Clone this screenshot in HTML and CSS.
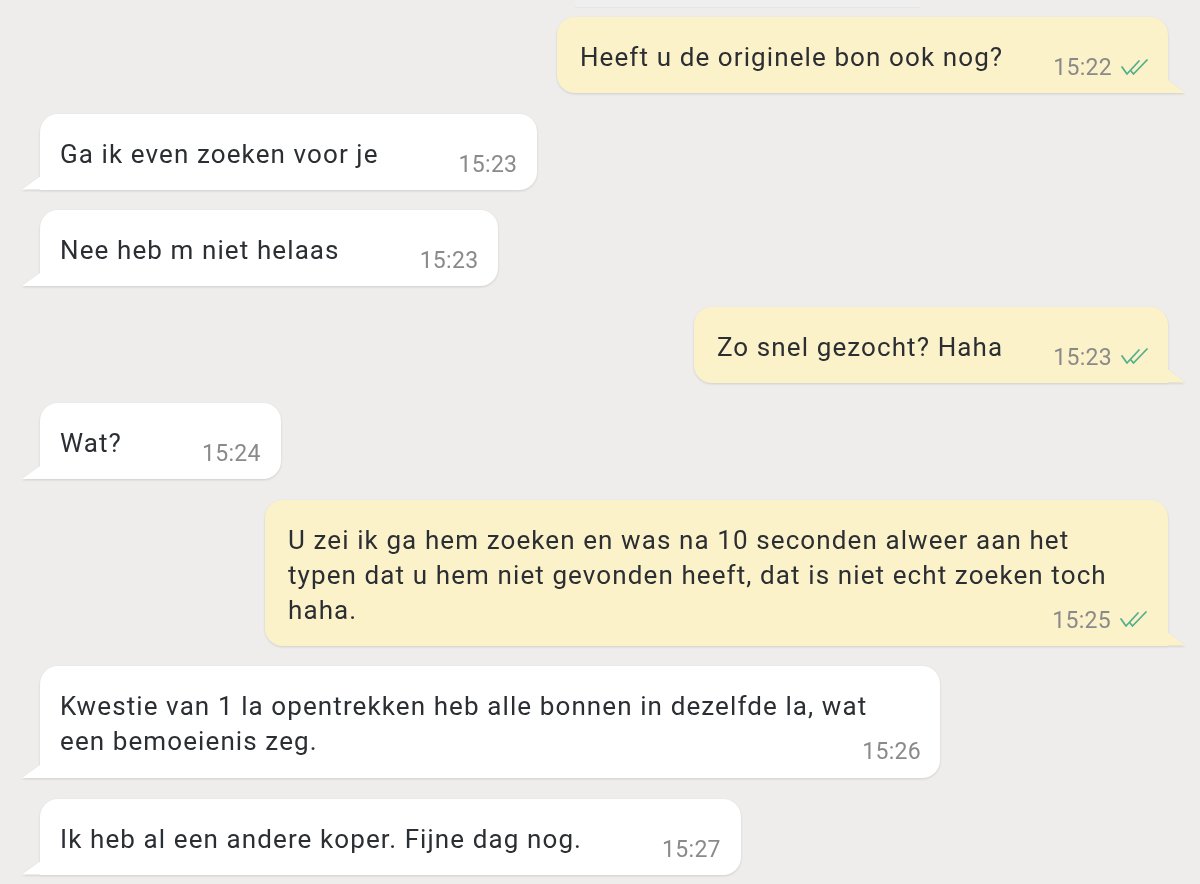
FILE: index.html
```html
<!DOCTYPE html>
<html lang="nl">
<head>
<meta charset="utf-8">
<title>Chat</title>
<link rel="stylesheet" href="styles.css">
</head>
<body>
<main class="chat">
  <div class="prev-edge"></div>

  <div class="row out">
    <div class="bubble">Heeft u de originele bon ook nog?<span class="meta">15:22<svg class="ticks" viewBox="0 0 30 18" width="30" height="18"><path d="M2 9 L7 16 L19 3"/><path d="M11 13 L13.5 16 L27 2"/></svg></span></div>
  </div>

  <div class="row in">
    <div class="bubble">Ga ik even zoeken voor je<span class="meta">15:23</span></div>
  </div>

  <div class="row in">
    <div class="bubble">Nee heb m niet helaas<span class="meta">15:23</span></div>
  </div>

  <div class="row out">
    <div class="bubble">Zo snel gezocht? Haha<span class="meta">15:23<svg class="ticks" viewBox="0 0 30 18" width="30" height="18"><path d="M2 9 L7 16 L19 3"/><path d="M11 13 L13.5 16 L27 2"/></svg></span></div>
  </div>

  <div class="row in">
    <div class="bubble">Wat?<span class="meta">15:24</span></div>
  </div>

  <div class="row out">
    <div class="bubble multi">U zei ik ga hem zoeken en was na 10 seconden alweer aan het typen dat u hem niet gevonden heeft, dat is niet echt zoeken toch haha.<span class="meta">15:25<svg class="ticks" viewBox="0 0 30 18" width="30" height="18"><path d="M2 9 L7 16 L19 3"/><path d="M11 13 L13.5 16 L27 2"/></svg></span></div>
  </div>

  <div class="row in">
    <div class="bubble multi">Kwestie van 1 la opentrekken heb alle bonnen in dezelfde la, wat een bemoeienis zeg.<span class="meta">15:26</span></div>
  </div>

  <div class="row in">
    <div class="bubble">Ik heb al een andere koper. Fijne dag nog.<span class="meta">15:27</span></div>
  </div>
</main>
</body>
</html>
```

FILE: styles.css
```css
html, body {
  margin: 0;
  padding: 0;
}

body {
  background: #eeedeb;
  font-family: Roboto, "Noto Sans", "Liberation Sans", sans-serif;
  color: #2b2e32;
  width: 1200px;
  height: 884px;
  overflow: hidden;
}

.chat {
  display: flex;
  flex-direction: column;
  gap: 20.5px;
  padding: 0 32px 0 40px;
}

.prev-edge {
  height: 7px;
  width: 345px;
  margin-left: 535px;
  margin-bottom: -10.5px;
  background: #f0eff0;
  box-shadow: 0 1px 1px rgba(0, 0, 0, 0.03);
}

.row {
  display: flex;
}

.row.out {
  justify-content: flex-end;
}

.row.in {
  justify-content: flex-start;
}

.bubble {
  position: relative;
  display: flow-root;
  box-sizing: border-box;
  max-width: 903px;
  padding: 23px 20px 18px 20px;
  font-size: 26px;
  letter-spacing: 1.1px;
  line-height: 35px;
  border-radius: 18px;
  filter: drop-shadow(0 1.5px 1px rgba(0, 0, 0, 0.13));
}

.in .bubble {
  background: #ffffff;
  border-bottom-left-radius: 0;
}

.out .bubble {
  background: #fcf2ca;
  border-bottom-right-radius: 0;
  padding-left: 23px;
  padding-right: 18px;
}

.bubble.multi {
  padding-right: 40px;
}

.in .bubble.multi {
  max-width: 900px;
  padding-bottom: 19px;
}

/* bubble tails */
.bubble::before {
  content: "";
  position: absolute;
  bottom: 0;
  width: 18px;
  height: 13px;
}

.in .bubble::before {
  left: -18px;
  background: #ffffff;
  clip-path: polygon(100% 0, 100% 100%, 0 100%);
}

.out .bubble::before {
  right: -17px;
  width: 17px;
  background: #fcf2ca;
  clip-path: polygon(0 0, 100% 100%, 0 100%);
}

.meta {
  float: right;
  display: flex;
  align-items: center;
  gap: 8px;
  font-size: 23px;
  letter-spacing: 0.3px;
  line-height: 25px;
  color: #8a8a8a;
  margin: 15px 0 -5px 80px;
}

.out .meta {
  margin-left: 50px;
}

.multi .meta {
  margin-right: -21px;
}

.ticks {
  fill: none;
  stroke: #53b08e;
  stroke-width: 1.8;
  stroke-linecap: round;
  stroke-linejoin: round;
  margin-top: -2px;
}
```
